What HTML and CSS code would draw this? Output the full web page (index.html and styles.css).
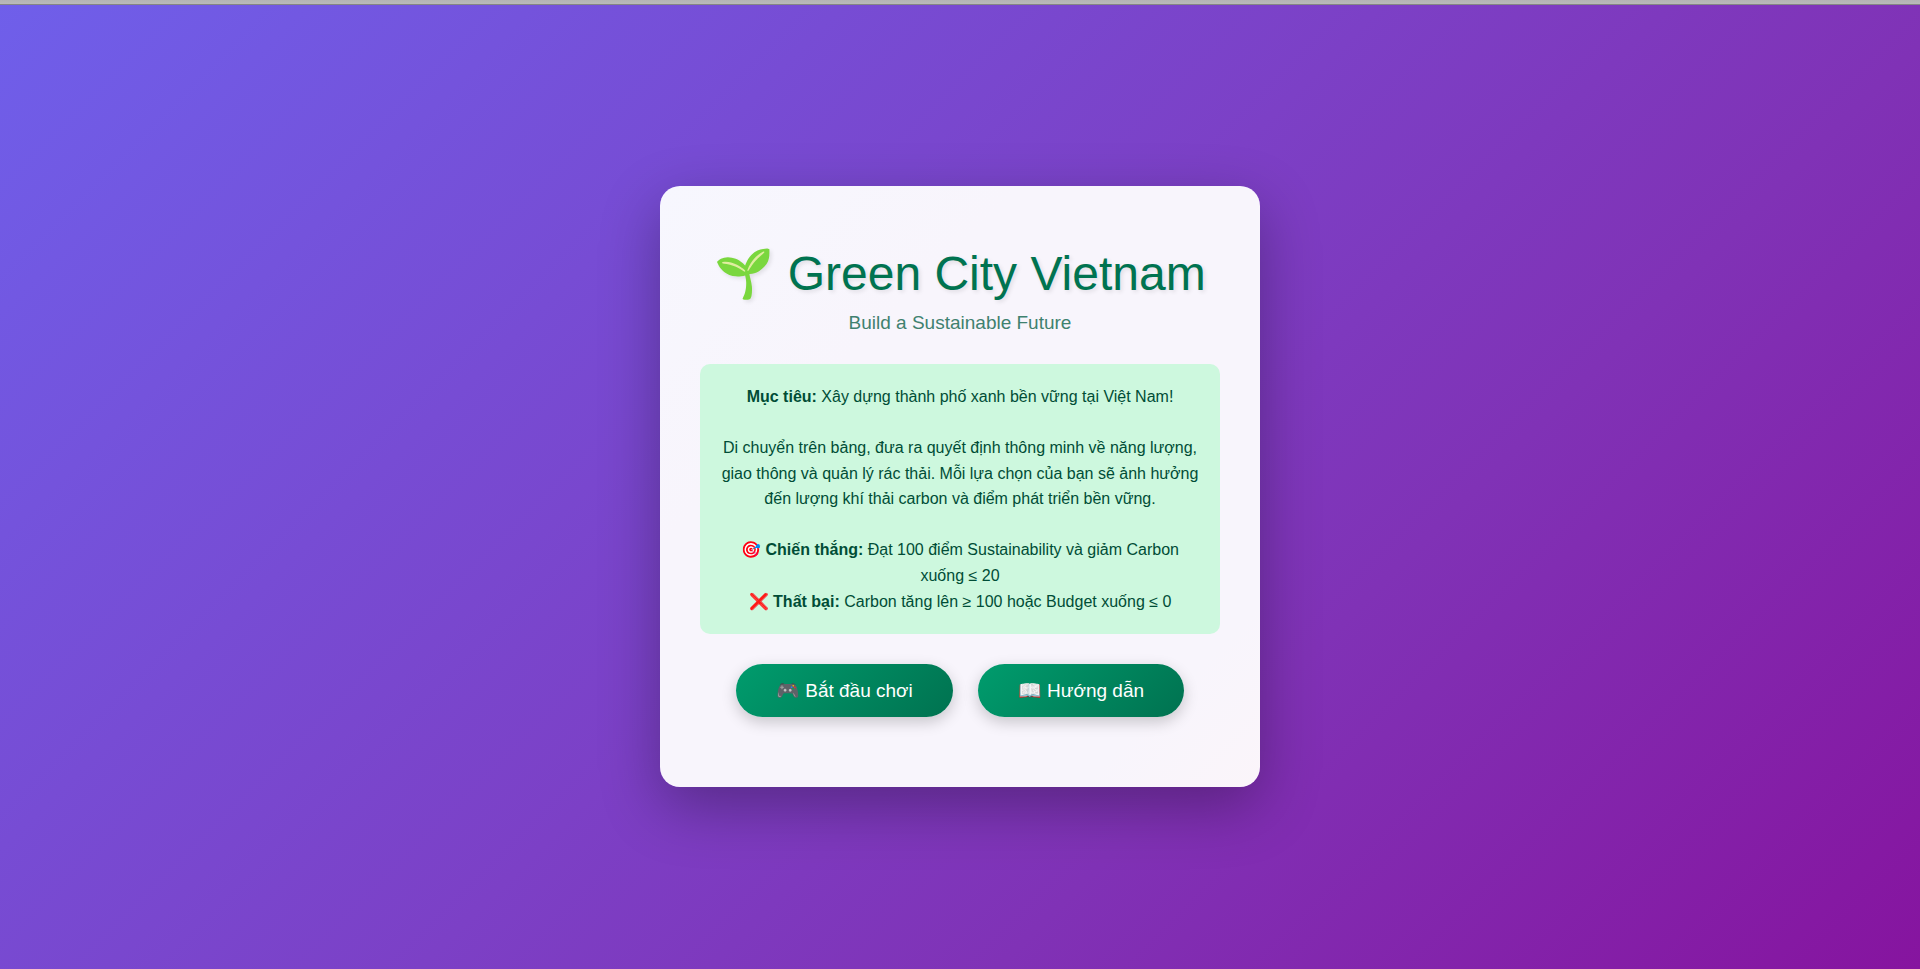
FILE: index.html
```
<!DOCTYPE html>
<html lang="vi">
<head>
<meta charset="utf-8">
<meta name="viewport" content="width=device-width, initial-scale=1">
<title>Green City Vietnam</title>
<link rel="stylesheet" href="styles.css">
</head>
<body class="page">
<div class="top-bar"></div>
<main class="screen">
  <section class="card">
    <h1 class="title"><span class="emoji-leaf">🌱</span> Green City Vietnam</h1>
    <p class="subtitle">Build a Sustainable Future</p>
    <div class="info">
      <p><strong>Mục tiêu:</strong> Xây dựng thành phố xanh bền vững tại Việt Nam!<br><br>
      Di chuyển trên bảng, đưa ra quyết định thông minh về năng lượng, giao thông và quản lý rác thải. Mỗi lựa chọn của bạn sẽ ảnh hưởng đến lượng khí thải carbon và điểm phát triển bền vững.<br><br>
      <span class="emoji-red">🎯</span> <strong>Chiến thắng:</strong> Đạt 100 điểm Sustainability và giảm Carbon xuống ≤ 20<br>
      <span class="emoji-red">❌</span> <strong>Thất bại:</strong> Carbon tăng lên ≥ 100 hoặc Budget xuống ≤ 0</p>
    </div>
    <div class="actions">
      <button class="btn" type="button">🎮 Bắt đầu chơi</button>
      <button class="btn" type="button">📖 Hướng dẫn</button>
    </div>
  </section>
</main>
</body>
</html>
```
FILE: styles.css
```
* {
  box-sizing: border-box;
  margin: 0;
  padding: 0;
}

.page {
  display: flex;
  flex-direction: column;
  min-height: 100vh;
  font-family: "Liberation Sans", Arial, sans-serif;
  background: linear-gradient(135deg, #6f5fea 0%, #7c40c6 48%, #8032b6 68%, #86149f 100%);
}

.top-bar {
  height: 4px;
  background: linear-gradient(#b4b4b4, #bababa);
  box-shadow: 0 1px #858585;
}

.screen {
  flex: 1;
  display: flex;
  align-items: center;
  justify-content: center;
}

.card {
  width: 100%;
  max-width: 600px;
  padding: 60px 40px 70px;
  border-radius: 20px;
  text-align: center;
  background: linear-gradient(135deg, #f7f7fe 0%, #f8f5fc 30%, #f8f5fc 85%, #fbf5fa 100%);
  box-shadow: 0 20px 60px rgba(0, 0, 0, 0.3);
}

.title {
  margin-bottom: 10px;
  font-size: 48px;
  font-weight: 400;
  line-height: 56px;
  color: #007350;
  text-shadow: 2px 2px 4px rgba(0, 0, 0, 0.1);
}

.emoji-leaf {
  filter: hue-rotate(16deg) saturate(1.1) brightness(1.05);
}

.emoji-red {
  filter: saturate(2) hue-rotate(-6deg);
}

.subtitle {
  margin-bottom: 30px;
  font-size: 19px;
  color: #3f816f;
}

.info {
  margin-bottom: 30px;
  padding: 20px;
  border-radius: 10px;
  font-size: 16px;
  line-height: 1.6;
  color: #004d36;
  background: #cdf8de;
}

.actions {
  display: flex;
  flex-wrap: wrap;
  justify-content: center;
  gap: 25px;
}

.btn {
  padding: 15px 40px;
  border: 0;
  border-radius: 50px;
  font-family: inherit;
  font-size: 19px;
  color: #fff;
  background: linear-gradient(135deg, #009c6d, #007250);
  box-shadow: 0 5px 15px rgba(0, 0, 0, 0.2);
  cursor: pointer;
}
```
